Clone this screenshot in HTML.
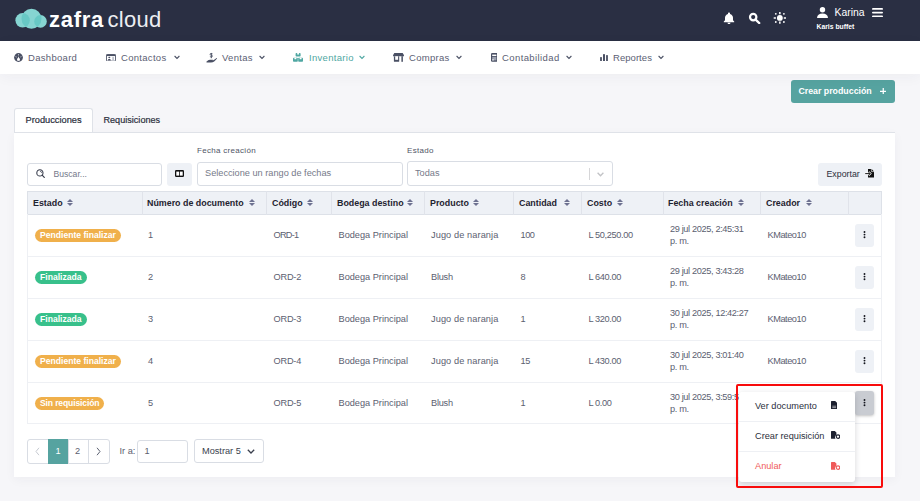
<!DOCTYPE html>
<html><head><meta charset="utf-8">
<style>
*{box-sizing:border-box;margin:0;padding:0}
html,body{width:920px;height:501px;overflow:hidden}
body{font-family:"Liberation Sans",sans-serif;background:#f6f6f9;position:relative;color:#3a3f4d}
.abs{position:absolute}
#hdr{left:0;top:0;width:920px;height:41px;background:#2a2f43}
#nav{left:0;top:41px;width:920px;height:33px;background:#fff;box-shadow:0 3px 14px rgba(40,45,80,0.045);z-index:2}
.ni{position:absolute;top:0;height:33px;line-height:33px;font-size:9.5px;letter-spacing:0.3px;color:#5b6074;white-space:nowrap}
.ni svg{position:absolute}
.txt{position:absolute;white-space:nowrap}
.card{left:14px;top:132px;width:881px;height:345px;background:#fff;box-shadow:0 3px 10px rgba(40,45,80,0.045)}
.tab{left:14px;top:108px;width:79px;height:24px;background:#fff;border:1px solid #dfe2e8;border-bottom:none;border-radius:3px 3px 0 0}
.inp{position:absolute;border:1px solid #d9dde4;border-radius:3px;background:#fff}
.btnl{position:absolute;background:#eef1f6;border-radius:3px}
table{border-collapse:collapse}
.th{position:absolute;top:191px;height:24px;background:#eef1f6;border:1px solid #dde1e8}
.hd{position:absolute;font-weight:bold;font-size:8.9px;color:#1f2330;white-space:nowrap;top:198px}
.sort{position:absolute;top:199px;width:6px;height:7px}
.rowl{position:absolute;left:27px;width:855px;height:1px;background:#eef0f4}
.cell{position:absolute;font-size:9.2px;color:#5b6070;white-space:nowrap}
.badge{position:absolute;height:12.6px;border-radius:7px;color:#fff;font-weight:bold;font-size:8.6px;line-height:12.2px;padding:0 5px;white-space:nowrap}
.or{background:#f0b04b}
.gr{background:#38c08b}
.keb{position:absolute;left:855px;width:19px;height:23px;background:#eef1f6;border-radius:3px}
.keb i{position:absolute;left:8.6px;width:2px;height:1.9px;background:#12141c;border-radius:1px}
</style></head>
<body>
<div id="hdr" class="abs">
  <svg class="abs" style="left:12px;top:5px" width="40" height="27" viewBox="12 5 40 27">
    <defs>
      <clipPath id="cL"><circle cx="22.6" cy="20.3" r="7.2"/></clipPath>
      <clipPath id="cR"><circle cx="40.5" cy="21.4" r="6.3"/></clipPath>
    </defs>
    <circle cx="31.5" cy="18.7" r="10" fill="#86d5d2"/>
    <circle cx="22.6" cy="20.3" r="7.2" fill="#86d5d2"/>
    <circle cx="40.5" cy="21.4" r="6.3" fill="#86d5d2"/>
    <circle cx="31.5" cy="18.7" r="10" fill="#68c9c5" clip-path="url(#cL)"/>
    <circle cx="31.5" cy="18.7" r="10" fill="#68c9c5" clip-path="url(#cR)"/>
  </svg>
  <div class="txt" style="left:49px;top:7px;font-size:22px;font-weight:bold;color:#fff;letter-spacing:0.7px">zafra</div>
  <div class="txt" style="left:107.5px;top:7px;font-size:22px;color:#eceef2;letter-spacing:0.3px">cloud</div>
  <!-- bell -->
  <svg class="abs" style="left:723px;top:12px" width="12" height="12" viewBox="0 0 12 12"><path d="M6 0.5c.6 0 1 .4 1 1v.4c1.8.5 3 2 3 3.9v2.4l1.2 1.4v.6H.8v-.6L2 8.2V5.8c0-1.9 1.2-3.4 3-3.9v-.4c0-.6.4-1 1-1zM4.5 10.8h3c0 .8-.7 1.2-1.5 1.2s-1.5-.4-1.5-1.2z" fill="#fff"/></svg>
  <!-- search -->
  <svg class="abs" style="left:748px;top:12px" width="13" height="12" viewBox="0 0 13 12"><circle cx="5.2" cy="5.1" r="3.2" stroke="#fff" stroke-width="2.2" fill="none"/><path d="M7.6 7.6L11.3 11.1" stroke="#fff" stroke-width="2.2" stroke-linecap="round"/></svg>
  <!-- sun -->
  <svg class="abs" style="left:772px;top:10px" width="16" height="16" viewBox="772 10 16 16"><circle cx="779.85" cy="17.9" r="2.9" fill="#fff"/><path d="M779.85 12v2.2M779.85 21.6v2.2M773.7 17.9h2.2M783.8 17.9h2.2" stroke="#fff" stroke-width="1.5"/><g fill="#fff"><circle cx="775.8" cy="13.8" r="0.9"/><circle cx="783.9" cy="13.8" r="0.9"/><circle cx="775.8" cy="22" r="0.9"/><circle cx="783.9" cy="22" r="0.9"/></g></svg>
  <!-- user -->
  <svg class="abs" style="left:817px;top:6.5px" width="11" height="11.3" viewBox="0 0 11 11.3"><circle cx="5.5" cy="2.8" r="2.7" fill="#fff"/><path d="M0 11.3c0-3 2-4.8 5.5-4.8s5.5 1.8 5.5 4.8z" fill="#fff"/></svg>
  <div class="txt" style="left:834.5px;top:6.5px;font-size:10.4px;color:#fff">Karina</div>
  <svg class="abs" style="left:872px;top:7.8px" width="11" height="9.2" viewBox="0 0 11 9.2"><rect y="0" width="11" height="1.8" rx="0.9" fill="#fff"/><rect y="3.7" width="11" height="1.8" rx="0.9" fill="#fff"/><rect y="7.4" width="11" height="1.8" rx="0.9" fill="#fff"/></svg>
  <div class="txt" style="left:816.5px;top:23px;font-size:6.8px;font-weight:bold;color:#fff">Karis buffet</div>
</div>

<div id="nav" class="abs">
  <div class="ni" style="left:14px"><svg style="left:0.3px;top:12px" width="9" height="9" viewBox="0 0 9 9"><circle cx="4.5" cy="4.5" r="4.4" fill="#4a5064"/><path d="M4.5 3.2L5.9 7.6H3.1z" fill="#fff"/><path d="M4.5 1.2v1.2M1.6 3.6l1 .4M7.4 3.6l-1 .4" stroke="#fff" stroke-width="0.7"/><circle cx="4.5" cy="6.4" r="1.3" fill="#fff"/></svg><span style="position:absolute;left:14px">Dashboard</span></div>
  <div class="ni" style="left:105px"><svg style="left:1px;top:12.8px" width="10" height="7.6" viewBox="0 0 10 7.6"><rect x="0.45" y="0.45" width="9.1" height="6.7" rx="1" fill="none" stroke="#4a5064" stroke-width="0.9"/><rect x="0.45" y="0.45" width="9.1" height="1.6" fill="#4a5064"/><ellipse cx="3.3" cy="3.5" rx="1" ry="0.7" fill="#4a5064"/><path d="M1.8 6.4c0-1.1.7-1.5 1.5-1.5s1.5.4 1.5 1.5z" fill="#4a5064"/><rect x="6.3" y="2.9" width="1.6" height="3.2" fill="#b8bcc8"/></svg><span style="position:absolute;left:16px">Contactos</span><svg style="left:69px;top:14px" width="6" height="5" viewBox="0 0 6 5"><path d="M0.6 1L3 3.4 5.4 1" stroke="#4a5064" stroke-width="1.1" fill="none"/></svg></div>
  <div class="ni" style="left:206px"><svg style="left:0;top:11px" width="11" height="11" viewBox="0 0 11 11"><path d="M0.5 9.5c1.2-.8 2-1.8 3.4-1.8h2.6c.5 0 .6.7 0 .8H4.6c2 .3 3.5-.4 5.6-2.3.5-.3 1 .1.6.6C9 9 7.6 10.5 5 10.5H0.5z" fill="#4a5064"/><path d="M5.3 1v5.2" stroke="#4a5064" stroke-width="1"/><path d="M6.6 1.9c-.3-.6-2.6-.8-2.6.4 0 1.1 2.6.6 2.6 1.7 0 1.1-2.3 1-2.7.4" stroke="#4a5064" stroke-width="0.8" fill="none"/></svg><span style="position:absolute;left:16px">Ventas</span><svg style="left:53px;top:14px" width="6" height="5" viewBox="0 0 6 5"><path d="M0.6 1L3 3.4 5.4 1" stroke="#4a5064" stroke-width="1.1" fill="none"/></svg></div>
  <div class="ni" style="left:293px;color:#4fa7a2"><svg style="left:0.4px;top:12px" width="10" height="9" viewBox="0 0 10 9"><g fill="#4fa7a2"><rect x="2.6" y="0" width="5" height="3.6" rx="0.8"/><rect x="0" y="4.8" width="4.8" height="4" rx="0.8"/><rect x="5.2" y="4.8" width="4.8" height="4" rx="0.8"/></g><g fill="#fff"><rect x="4.1" y="0" width="2" height="1.5" rx="0.5"/><rect x="1.4" y="4.8" width="2" height="1.5" rx="0.5"/><rect x="6.6" y="4.8" width="2" height="1.5" rx="0.5"/></g></svg><span style="position:absolute;left:16px">Inventario</span><svg style="left:66px;top:14px" width="6" height="5" viewBox="0 0 6 5"><path d="M0.6 1L3 3.4 5.4 1" stroke="#4fa7a2" stroke-width="1.1" fill="none"/></svg></div>
  <div class="ni" style="left:393px"><svg style="left:0;top:12px" width="11" height="9" viewBox="0 0 11 9"><g fill="#4a5064"><path d="M1.3 0h8.4l1.3 2.3v0.9H0v-0.9z"/><rect x="0.9" y="3.2" width="5.3" height="5.6" rx="0.6"/><rect x="8.4" y="3.2" width="1.5" height="5.6"/></g><rect x="2.2" y="3.2" width="2.9" height="3.6" fill="#fff"/></svg><span style="position:absolute;left:16px">Compras</span><svg style="left:63px;top:14px" width="6" height="5" viewBox="0 0 6 5"><path d="M0.6 1L3 3.4 5.4 1" stroke="#4a5064" stroke-width="1.1" fill="none"/></svg></div>
  <div class="ni" style="left:490px"><svg style="left:0.7px;top:12px" width="6.6" height="8.8" viewBox="0 0 6.6 8.8"><rect x="0" y="0" width="6.6" height="8.8" rx="1.2" fill="#4a5064"/><rect x="1.2" y="1.6" width="4.2" height="1.4" fill="#fff"/><rect x="1.2" y="3.8" width="4.2" height="3.6" fill="#9da2b0"/><rect x="1.2" y="6.4" width="1.6" height="1" fill="#fff"/></svg><span style="position:absolute;left:12px;letter-spacing:0.4px">Contabilidad</span><svg style="left:76px;top:14px" width="6" height="5" viewBox="0 0 6 5"><path d="M0.6 1L3 3.4 5.4 1" stroke="#4a5064" stroke-width="1.1" fill="none"/></svg></div>
  <div class="ni" style="left:600px"><svg style="left:0;top:12.9px" width="8" height="7.4" viewBox="0 0 8 7.4"><g fill="#4a5064"><rect x="0.1" y="2.9" width="1.8" height="4.5" rx="0.6"/><rect x="3" y="0" width="2" height="7.4" rx="0.7"/><rect x="6.1" y="1.1" width="1.8" height="6.3" rx="0.6"/></g></svg><span style="position:absolute;left:13px;letter-spacing:0.05px">Reportes</span><svg style="left:58px;top:14px" width="6" height="5" viewBox="0 0 6 5"><path d="M0.6 1L3 3.4 5.4 1" stroke="#4a5064" stroke-width="1.1" fill="none"/></svg></div>
</div>

<!-- create button -->
<div class="abs" style="left:790.8px;top:80.2px;width:104px;height:23.2px;background:#56a3a0;border-radius:3px">
  <div class="txt" style="left:7.6px;top:5.8px;font-size:8.8px;font-weight:bold;color:#fff">Crear producción</div>
  <svg class="abs" style="left:88.8px;top:7.8px" width="6.5" height="6.5" viewBox="0 0 6.5 6.5"><path d="M3.25 0v6.5M0 3.25h6.5" stroke="#fff" stroke-width="1.25"/></svg>
</div>

<div class="card abs"></div>
<div class="abs" style="left:14px;top:132px;width:881px;height:1px;background:#dfe2e8"></div>
<div class="tab abs"></div>
<div class="txt" style="left:25.5px;top:114.7px;font-size:9.25px;color:#2b2f3c;-webkit-text-stroke:0.2px #2b2f3c">Producciones</div>
<div class="txt" style="left:103.5px;top:114.7px;font-size:9.1px;color:#2b2f3c;-webkit-text-stroke:0.2px #2b2f3c">Requisiciones</div>

<div class="txt" style="left:197px;top:146.3px;font-size:8px;letter-spacing:0.3px;color:#4f5566">Fecha creación</div>
<div class="txt" style="left:407px;top:146.3px;font-size:8px;letter-spacing:0.3px;color:#4f5566">Estado</div>

<div class="inp" style="left:27px;top:163px;width:135px;height:23px"></div>
<svg class="abs" style="left:35.5px;top:169px" width="9" height="9" viewBox="0 0 9 9"><circle cx="3.9" cy="3.9" r="3.1" stroke="#333848" stroke-width="1.05" fill="none"/><path d="M6.1 6.1L8.3 8.3" stroke="#333848" stroke-width="1.2" stroke-linecap="round"/><path d="M3.9 2.2a1.7 1.7 0 0 1 1.7 1.7" stroke="#333848" stroke-width="0.7" fill="none"/></svg>
<div class="txt" style="left:53.5px;top:168.6px;font-size:8.6px;color:#737889">Buscar...</div>

<div class="btnl" style="left:167px;top:163px;width:25px;height:23px"></div>
<svg class="abs" style="left:175px;top:169.7px" width="9" height="7" viewBox="0 0 9 7"><rect x="0" y="0" width="9" height="7" rx="1.2" fill="#111"/><rect x="1.3" y="1.6" width="2.8" height="4" fill="#fff"/><rect x="4.9" y="1.6" width="2.8" height="4" fill="#fff"/></svg>

<div class="inp" style="left:197px;top:162px;width:206px;height:24px"></div>
<div class="txt" style="left:205px;top:168px;font-size:9.2px;color:#767a89">Seleccione un rango de fechas</div>

<div class="inp" style="left:407px;top:161px;width:206px;height:25px"></div>
<div class="txt" style="left:415px;top:168px;font-size:9.2px;color:#767a89">Todas</div>
<div class="abs" style="left:588.5px;top:167.5px;width:1px;height:12.5px;background:#d6d6d8"></div>
<svg class="abs" style="left:597px;top:171.6px" width="7" height="5" viewBox="0 0 7 5"><path d="M0.6 0.8L3.5 3.8 6.4 0.8" stroke="#c2c3c6" stroke-width="1.3" fill="none"/></svg>

<div class="btnl" style="left:818px;top:163px;width:64px;height:22.5px"></div>
<div class="txt" style="left:826.5px;top:169px;font-size:8.8px;color:#2b2f3c">Exportar</div>
<svg class="abs" style="left:865px;top:168.5px" width="9" height="9" viewBox="0 0 9 9"><path d="M3 0h3.6L9 2.4V8.5H3z" fill="#111"/><path d="M6.4 0v2.6H9" fill="none" stroke="#fff" stroke-width="0.6"/><path d="M0 4.6h5.2M3.6 3l1.7 1.6-1.7 1.6" stroke="#fff" stroke-width="2" fill="none"/><path d="M0.2 4.6h5M3.7 3.1l1.5 1.5-1.5 1.5" stroke="#111" stroke-width="0.95" fill="none"/></svg>

<!-- table header -->
<div class="th" style="left:27px;width:855px"></div>
<div class="abs" style="left:142px;top:191px;width:1px;height:23.5px;background:#e0e3ea"></div>
<div class="abs" style="left:266px;top:191px;width:1px;height:23.5px;background:#e0e3ea"></div>
<div class="abs" style="left:331px;top:191px;width:1px;height:23.5px;background:#e0e3ea"></div>
<div class="abs" style="left:424px;top:191px;width:1px;height:23.5px;background:#e0e3ea"></div>
<div class="abs" style="left:513px;top:191px;width:1px;height:23.5px;background:#e0e3ea"></div>
<div class="abs" style="left:581px;top:191px;width:1px;height:23.5px;background:#e0e3ea"></div>
<div class="abs" style="left:663px;top:191px;width:1px;height:23.5px;background:#e0e3ea"></div>
<div class="abs" style="left:760px;top:191px;width:1px;height:23.5px;background:#e0e3ea"></div>
<div class="abs" style="left:848px;top:191px;width:1px;height:23.5px;background:#e0e3ea"></div>

<div class="hd" style="left:33px">Estado</div>
<div class="hd" style="left:147px">Número de documento</div>
<div class="hd" style="left:272px">Código</div>
<div class="hd" style="left:337px">Bodega destino</div>
<div class="hd" style="left:430px">Producto</div>
<div class="hd" style="left:519px">Cantidad</div>
<div class="hd" style="left:587px">Costo</div>
<div class="hd" style="left:668px">Fecha creación</div>
<div class="hd" style="left:766px">Creador</div>
<svg width="0" height="0" style="position:absolute"><defs><g id="srt"><path d="M3 0L6 3.1H0z" fill="#6d7190"/><path d="M3 7L6 3.9H0z" fill="#6d7190"/></g></defs></svg>
<svg class="sort" style="left:66.5px" viewBox="0 0 6 7"><use href="#srt"/></svg>
<svg class="sort" style="left:249px" viewBox="0 0 6 7"><use href="#srt"/></svg>
<svg class="sort" style="left:307px" viewBox="0 0 6 7"><use href="#srt"/></svg>
<svg class="sort" style="left:407px" viewBox="0 0 6 7"><use href="#srt"/></svg>
<svg class="sort" style="left:473px" viewBox="0 0 6 7"><use href="#srt"/></svg>
<svg class="sort" style="left:564px" viewBox="0 0 6 7"><use href="#srt"/></svg>
<svg class="sort" style="left:616.5px" viewBox="0 0 6 7"><use href="#srt"/></svg>
<svg class="sort" style="left:737.5px" viewBox="0 0 6 7"><use href="#srt"/></svg>
<svg class="sort" style="left:805.5px" viewBox="0 0 6 7"><use href="#srt"/></svg>

<!-- table body borders -->
<div class="abs" style="left:27px;top:214px;width:1px;height:210px;background:#eef0f4"></div>
<div class="abs" style="left:881px;top:214px;width:1px;height:210px;background:#eef0f4"></div>
<div class="rowl" style="top:256px"></div>
<div class="rowl" style="top:298px"></div>
<div class="rowl" style="top:340px"></div>
<div class="rowl" style="top:382px"></div>
<div class="rowl" style="top:423px"></div>

<!-- rows -->
<div class="badge or" style="left:35px;top:229px">Pendiente finalizar</div>
<div class="badge gr" style="left:35px;top:271px">Finalizada</div>
<div class="badge gr" style="left:35px;top:313px">Finalizada</div>
<div class="badge or" style="left:35px;top:355px">Pendiente finalizar</div>
<div class="badge or" style="left:35px;top:397px;letter-spacing:-0.15px">Sin requisición</div>

<!--ROWS-->
<div class="cell" style="left:148px;top:229.7px;letter-spacing:-0.4px;">1</div>
<div class="cell" style="left:273.5px;top:229.7px;letter-spacing:-0.75px;">ORD-1</div>
<div class="cell" style="left:338.5px;top:229.7px;">Bodega Principal</div>
<div class="cell" style="left:431px;top:229.7px;letter-spacing:0.1px;">Jugo de naranja</div>
<div class="cell" style="left:520.5px;top:229.7px;letter-spacing:-0.45px;">100</div>
<div class="cell" style="left:588.5px;top:229.7px;letter-spacing:-0.36px;">L 50,250.00</div>
<div class="cell" style="left:670px;top:223.3px;line-height:12px;letter-spacing:-0.36px;">29 jul 2025, 2:45:31<br>p. m.</div>
<div class="cell" style="left:767.5px;top:229.7px;letter-spacing:-0.44px;">KMateo10</div>
<div class="keb" style="top:223.5px"><svg style="position:absolute;left:8px;top:7.3px" width="3" height="8" viewBox="0 0 3 8"><circle cx="1.5" cy="1" r="0.95" fill="#12141c"/><circle cx="1.5" cy="3.6" r="0.95" fill="#12141c"/><circle cx="1.5" cy="6.2" r="0.95" fill="#12141c"/></svg></div>
<div class="cell" style="left:148px;top:271.7px;letter-spacing:-0.4px;">2</div>
<div class="cell" style="left:273.5px;top:271.7px;letter-spacing:-0.2px;">ORD-2</div>
<div class="cell" style="left:338.5px;top:271.7px;">Bodega Principal</div>
<div class="cell" style="left:431px;top:271.7px;letter-spacing:-0.24px;">Blush</div>
<div class="cell" style="left:520.5px;top:271.7px;letter-spacing:-0.45px;">8</div>
<div class="cell" style="left:588.5px;top:271.7px;letter-spacing:-0.36px;">L 640.00</div>
<div class="cell" style="left:670px;top:265.3px;line-height:12px;letter-spacing:-0.36px;">29 jul 2025, 3:43:28<br>p. m.</div>
<div class="cell" style="left:767.5px;top:271.7px;letter-spacing:-0.44px;">KMateo10</div>
<div class="keb" style="top:265.5px"><svg style="position:absolute;left:8px;top:7.3px" width="3" height="8" viewBox="0 0 3 8"><circle cx="1.5" cy="1" r="0.95" fill="#12141c"/><circle cx="1.5" cy="3.6" r="0.95" fill="#12141c"/><circle cx="1.5" cy="6.2" r="0.95" fill="#12141c"/></svg></div>
<div class="cell" style="left:148px;top:313.7px;letter-spacing:-0.4px;">3</div>
<div class="cell" style="left:273.5px;top:313.7px;letter-spacing:-0.2px;">ORD-3</div>
<div class="cell" style="left:338.5px;top:313.7px;">Bodega Principal</div>
<div class="cell" style="left:431px;top:313.7px;letter-spacing:0.1px;">Jugo de naranja</div>
<div class="cell" style="left:520.5px;top:313.7px;letter-spacing:-0.45px;">1</div>
<div class="cell" style="left:588.5px;top:313.7px;letter-spacing:-0.36px;">L 320.00</div>
<div class="cell" style="left:670px;top:307.3px;line-height:12px;letter-spacing:-0.36px;">30 jul 2025, 12:42:27<br>p. m.</div>
<div class="cell" style="left:767.5px;top:313.7px;letter-spacing:-0.44px;">KMateo10</div>
<div class="keb" style="top:307.5px"><svg style="position:absolute;left:8px;top:7.3px" width="3" height="8" viewBox="0 0 3 8"><circle cx="1.5" cy="1" r="0.95" fill="#12141c"/><circle cx="1.5" cy="3.6" r="0.95" fill="#12141c"/><circle cx="1.5" cy="6.2" r="0.95" fill="#12141c"/></svg></div>
<div class="cell" style="left:148px;top:355.7px;letter-spacing:-0.4px;">4</div>
<div class="cell" style="left:273.5px;top:355.7px;letter-spacing:-0.2px;">ORD-4</div>
<div class="cell" style="left:338.5px;top:355.7px;">Bodega Principal</div>
<div class="cell" style="left:431px;top:355.7px;letter-spacing:0.1px;">Jugo de naranja</div>
<div class="cell" style="left:520.5px;top:355.7px;letter-spacing:-0.45px;">15</div>
<div class="cell" style="left:588.5px;top:355.7px;letter-spacing:-0.36px;">L 430.00</div>
<div class="cell" style="left:670px;top:349.3px;line-height:12px;letter-spacing:-0.36px;">30 jul 2025, 3:01:40<br>p. m.</div>
<div class="cell" style="left:767.5px;top:355.7px;letter-spacing:-0.44px;">KMateo10</div>
<div class="keb" style="top:349.5px"><svg style="position:absolute;left:8px;top:7.3px" width="3" height="8" viewBox="0 0 3 8"><circle cx="1.5" cy="1" r="0.95" fill="#12141c"/><circle cx="1.5" cy="3.6" r="0.95" fill="#12141c"/><circle cx="1.5" cy="6.2" r="0.95" fill="#12141c"/></svg></div>
<div class="cell" style="left:148px;top:397.7px;letter-spacing:-0.4px;">5</div>
<div class="cell" style="left:273.5px;top:397.7px;letter-spacing:-0.2px;">ORD-5</div>
<div class="cell" style="left:338.5px;top:397.7px;">Bodega Principal</div>
<div class="cell" style="left:431px;top:397.7px;letter-spacing:-0.24px;">Blush</div>
<div class="cell" style="left:520.5px;top:397.7px;letter-spacing:-0.45px;">1</div>
<div class="cell" style="left:588.5px;top:397.7px;letter-spacing:-0.36px;">L 0.00</div>
<div class="cell" style="left:670px;top:391.3px;line-height:12px;letter-spacing:-0.36px;">30 jul 2025, 3:59:52<br>p. m.</div>
<div class="cell" style="left:767.5px;top:397.7px;letter-spacing:-0.44px;">KMateo10</div>
<!--/ROWS-->

<!-- pagination -->
<div class="inp" style="left:27px;top:439px;width:83px;height:25px;border-color:#d9dde4"></div>
<div class="abs" style="left:48px;top:439px;width:20px;height:25px;background:#56a3a0"></div>
<div class="abs" style="left:68px;top:440px;width:1px;height:23px;background:#d9dde4"></div>
<div class="abs" style="left:88px;top:440px;width:1px;height:23px;background:#d9dde4"></div>
<svg class="abs" style="left:35px;top:447px" width="5" height="9" viewBox="0 0 5 9"><path d="M4 0.8L1 4.5 4 8.2" stroke="#c5c9d0" stroke-width="1" fill="none"/></svg>
<div class="txt" style="left:55.5px;top:446px;font-size:9.2px;color:#fff">1</div>
<div class="txt" style="left:75px;top:446px;font-size:9.2px;color:#5b6070">2</div>
<svg class="abs" style="left:96px;top:447px" width="5" height="9" viewBox="0 0 5 9"><path d="M1 0.8L4 4.5 1 8.2" stroke="#5b6070" stroke-width="1" fill="none"/></svg>
<div class="txt" style="left:119.5px;top:446px;font-size:9.2px;color:#5b6070">Ir a:</div>
<div class="inp" style="left:137px;top:440px;width:51px;height:23px"></div>
<div class="txt" style="left:144.5px;top:446px;font-size:9.2px;color:#5b6070">1</div>
<div class="inp" style="left:194px;top:439px;width:70px;height:24px"></div>
<div class="txt" style="left:202px;top:446px;font-size:9.2px;color:#3a3f4d">Mostrar 5</div>
<svg class="abs" style="left:246.5px;top:449px" width="8" height="5" viewBox="0 0 8 5"><path d="M0.8 0.8L4 4 7.2 0.8" stroke="#3a3f4d" stroke-width="1.3" fill="none"/></svg>

<!-- active kebab -->
<div class="abs" style="left:855px;top:390.5px;width:19px;height:24px;background:#c9ccd2;border-radius:3px;box-shadow:0 1px 3px rgba(0,0,0,0.25)"><svg style="position:absolute;left:8px;top:8.2px" width="3" height="8" viewBox="0 0 3 8"><circle cx="1.5" cy="1" r="0.95" fill="#12141c"/><circle cx="1.5" cy="3.6" r="0.95" fill="#12141c"/><circle cx="1.5" cy="6.2" r="0.95" fill="#12141c"/></svg></div>

<!-- dropdown -->
<div class="abs" style="left:739px;top:392px;width:116px;height:90px;background:#fff;border-radius:3px;box-shadow:0 2px 6px rgba(30,35,50,0.18)"></div>
<div class="abs" style="left:739px;top:421px;width:116px;height:1px;background:#eef0f4"></div>
<div class="abs" style="left:739px;top:451px;width:116px;height:1px;background:#eef0f4"></div>
<div class="txt" style="left:755px;top:401px;font-size:9.2px;color:#2b2f3c">Ver documento</div>
<div class="txt" style="left:755px;top:431px;font-size:9.2px;color:#2b2f3c">Crear requisición</div>
<div class="txt" style="left:755px;top:461px;font-size:9.2px;color:#ef5a5a">Anular</div>
<svg class="abs" style="left:831px;top:401.2px" width="6.4" height="8.3" viewBox="0 0 6.4 8.3"><path d="M0.6 0h3.6l2.2 2.2v5.5a0.6 0.6 0 0 1-0.6 0.6H0.6A0.6 0.6 0 0 1 0 7.7V0.6A0.6 0.6 0 0 1 0.6 0z" fill="#1d2130"/><path d="M1.3 5.2h3.8M1.3 6.6h3.8" stroke="#fff" stroke-width="0.55"/></svg>
<svg class="abs" style="left:830.5px;top:431.3px" width="9.5" height="7.8" viewBox="0 0 9.5 7.8"><path d="M0.5 0h3.3l1.6 1.6v2.3A2.6 2.6 0 0 0 4.6 7.8H0.5A0.5 0.5 0 0 1 0 7.3V0.5A0.5 0.5 0 0 1 0.5 0z" fill="#1d2130"/><circle cx="7" cy="5.6" r="1.75" fill="none" stroke="#1d2130" stroke-width="1.1"/></svg>
<svg class="abs" style="left:830.5px;top:462px" width="9.5" height="7.8" viewBox="0 0 9.5 7.8"><path d="M0.5 0h3.3l1.6 1.6v2.3A2.6 2.6 0 0 0 4.6 7.8H0.5A0.5 0.5 0 0 1 0 7.3V0.5A0.5 0.5 0 0 1 0.5 0z" fill="#ef5a5a"/><circle cx="7" cy="5.6" r="1.75" fill="none" stroke="#ef5a5a" stroke-width="1.1"/></svg>

<!-- red highlight box -->
<div class="abs" style="left:736px;top:384px;width:146.5px;height:104px;border:2px solid #f80c0c;border-radius:2px"></div>
</body></html>
